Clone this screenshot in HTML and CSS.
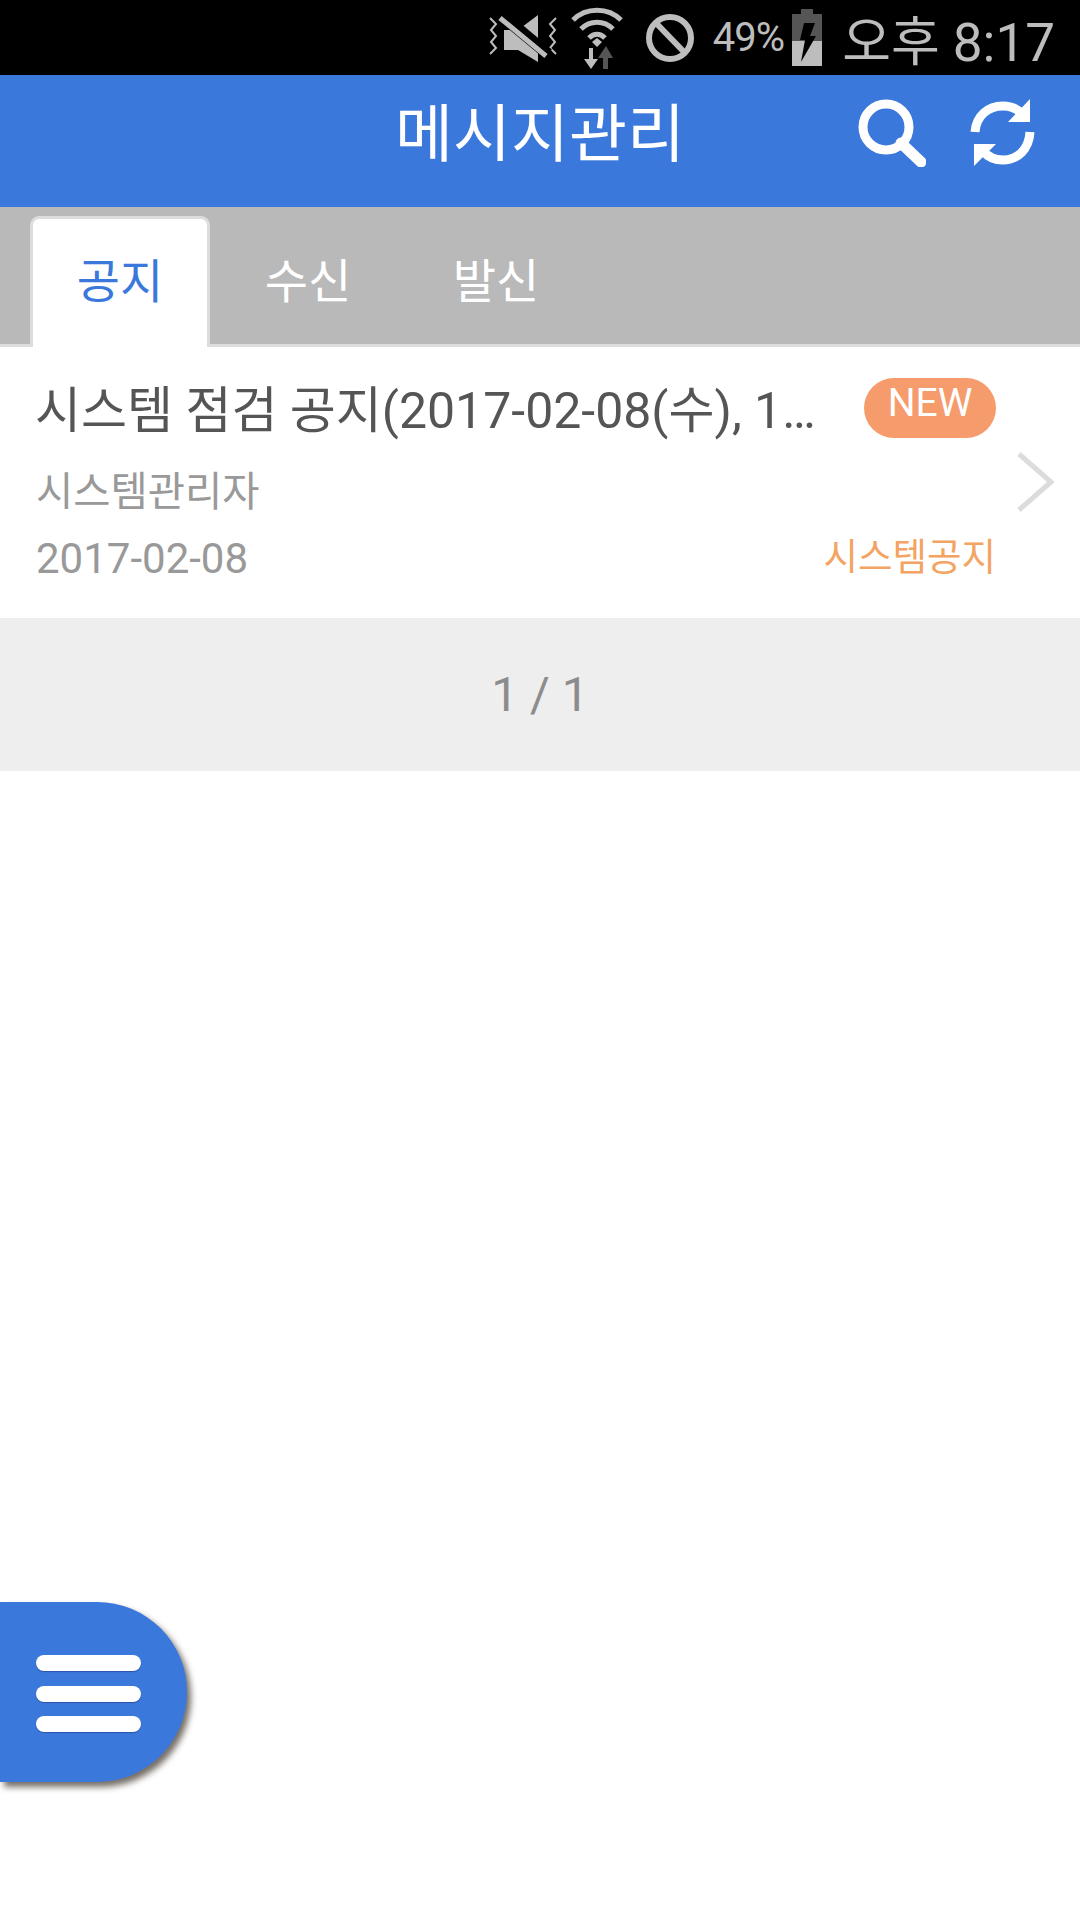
FILE: index.html
```html
<!DOCTYPE html>
<html lang="ko">
<head>
    <meta charset="UTF-8">
    <meta name="viewport" content="width=device-width, initial-scale=1.0">
    <title>메시지관리</title>
    <link rel="stylesheet" href="styles.css">
</head>
<body>
    <div class="status-bar">
        <svg class="icon-mute" viewBox="0 0 70 56">
            <path d="M2 8l6 6-5 6 5 6-5 6 5 6-6 6M68 8l-6 6 5 6-5 6 5 6-5 6 6 6" fill="none" stroke="#bdbdbd" stroke-width="2"/>
            <path d="M16 20h14L50 5v47L30 40H16z" fill="#bdbdbd"/>
            <path d="M12 4l48 40" stroke="#000" stroke-width="12"/>
            <path d="M12 8l46 38" stroke="#bdbdbd" stroke-width="5"/>
        </svg>
        <svg class="icon-wifi" viewBox="0 0 52 64">
            <path d="M2 14C15 1 37 1 50 14M10 23c9-9 23-9 32 0M18 32c5-5 11-5 16 0" fill="none" stroke="#bdbdbd" stroke-width="5"/>
            <path d="M21 36l5-4 5 4-5 5z" fill="#bdbdbd"/>
            <path d="M18 42h4v11h5l-7 10-7-10h5z" fill="#bdbdbd"/>
            <path d="M32 63V52h-5l8-12 7 12h-5v11z" fill="#555"/>
        </svg>
        <svg class="icon-ban" viewBox="0 0 48 58">
            <circle cx="24" cy="29" r="21" fill="none" stroke="#bdbdbd" stroke-width="6"/>
            <path d="M10 14l29 30" stroke="#bdbdbd" stroke-width="6"/>
        </svg>
        <span class="battery-text">49%</span>
        <svg class="icon-battery" viewBox="0 0 30 57">
            <path d="M9 0h12v5h9v27H0V5h9z" fill="#555"/>
            <path d="M0 32h30v25H0z" fill="#bdbdbd"/>
            <path d="M12 14h11l-5 13h6L9 53l4-22H8z" fill="#000"/>
        </svg>
        <span class="clock">오후 8:17</span>
    </div>

    <header class="app-header">
        <h1>메시지관리</h1>
        <div class="header-icons">
            <svg class="icon-search" viewBox="0 0 68 68">
                <circle cx="28" cy="28" r="23" fill="none" stroke="#fff" stroke-width="9"/>
                <path d="M43 44l20 19" stroke="#fff" stroke-width="11" stroke-linecap="round"/>
            </svg>
            <svg class="icon-refresh" viewBox="0 0 66 68">
                <path d="M5 33C6 17 18 7 33 7c8 0 15 3 20 9" fill="none" stroke="#fff" stroke-width="9"/>
                <path d="M60 0v23H38z" fill="#fff"/>
                <path d="M60 33C59 50 48 61 33 61c-8 0-15-3-20-9" fill="none" stroke="#fff" stroke-width="9"/>
                <path d="M4 67V45h22z" fill="#fff"/>
            </svg>
        </div>
    </header>

    <nav class="tabs">
        <div class="tab active">공지</div>
        <div class="tab">수신</div>
        <div class="tab">발신</div>
    </nav>

    <div class="msg-item">
        <div class="msg-body">
            <div class="msg-row">
                <span class="msg-title">시스템 점검 공지(2017-02-08(수), 1…</span>
                <span class="badge-new">NEW</span>
            </div>
            <div class="msg-sender">시스템관리자</div>
            <div class="msg-row">
                <span class="msg-date">2017-02-08</span>
                <span class="msg-category">시스템공지</span>
            </div>
        </div>
        <svg class="chevron" viewBox="0 0 38 62">
            <path d="M3 3l32 28L3 59" fill="none" stroke="#dcdcdc" stroke-width="5"/>
        </svg>
    </div>

    <div class="pager">1 / 1</div>

    <button class="fab">
        <span></span>
        <span></span>
        <span></span>
    </button>
</body>
</html>
```

FILE: styles.css
```css
html, body {
    margin: 0;
    padding: 0;
}
body {
    width: 1080px;
    height: 1920px;
    background: #fff;
    font-family: Roboto, "Noto Sans CJK KR", sans-serif;
    position: relative;
    overflow: hidden;
}
.status-bar {
    height: 75px;
    background: #000;
    color: #bdbdbd;
    display: flex;
    align-items: center;
    justify-content: flex-end;
    padding-right: 25px;
    box-sizing: border-box;
}
.icon-mute {
    width: 70px;
    height: 56px;
    margin-right: 13px;
}
.icon-wifi {
    width: 52px;
    height: 64px;
    margin-right: 23px;
}
.icon-ban {
    width: 48px;
    height: 58px;
    margin-right: 19px;
}
.battery-text {
    font-size: 40px;
    letter-spacing: -1px;
    margin-right: 8px;
}
.icon-battery {
    width: 30px;
    height: 57px;
    margin-right: 20px;
}
.clock {
    font-size: 53px;
}
.app-header {
    height: 132px;
    background: #3b78db;
    position: relative;
    display: flex;
    align-items: center;
    justify-content: center;
    padding-bottom: 12px;
    box-sizing: border-box;
}
.app-header h1 {
    margin: 0;
    color: #fff;
    font-size: 63px;
    font-weight: 400;
    line-height: 1.2;
}
.header-icons {
    position: absolute;
    top: 24px;
    right: 44px;
    display: flex;
    gap: 44px;
}
.icon-search {
    width: 68px;
    height: 68px;
}
.icon-refresh {
    width: 66px;
    height: 68px;
}
.tabs {
    height: 140px;
    background: #b9b9b9;
    border-bottom: 3px solid #ddd;
    box-sizing: border-box;
    display: flex;
    align-items: flex-end;
    gap: 8px;
    padding-left: 30px;
}
.tab {
    width: 180px;
    height: 128px;
    box-sizing: border-box;
    margin-bottom: -3px;
    color: #fff;
    font-size: 47px;
    display: flex;
    align-items: center;
    justify-content: center;
    padding-bottom: 12px;
}
.tab.active {
    height: 131px;
    background: #fff;
    color: #3b78db;
    border: 3px solid #ddd;
    border-bottom: none;
    border-radius: 9px 9px 0 0;
}
.msg-item {
    height: 271px;
    box-sizing: border-box;
    display: flex;
    align-items: flex-start;
    padding: 31px 24px 0 36px;
}
.msg-body {
    width: 960px;
}
.msg-row {
    height: 60px;
    display: flex;
    align-items: center;
    justify-content: space-between;
}
.msg-title {
    margin-top: 6px;
    margin-left: -1px;
    font-size: 50px;
    line-height: 64px;
    color: #555;
    white-space: nowrap;
}
.badge-new {
    width: 132px;
    height: 60px;
    border-radius: 30px;
    background: #f69b6c;
    color: #fff;
    font-size: 39px;
    text-align: center;
    line-height: 50px;
}
.msg-sender {
    height: 60px;
    margin: 24px 0 6px;
    font-size: 40.5px;
    line-height: 60px;
    color: #999;
}
.msg-date {
    font-size: 42px;
    color: #999;
}
.msg-category {
    font-size: 37.5px;
    color: #f4a462;
    margin-top: -10px;
}
.chevron {
    width: 38px;
    height: 62px;
    margin-left: 20px;
    margin-top: 73px;
}
.pager {
    height: 153px;
    background: #eee;
    color: #8c8c8c;
    font-size: 48px;
    display: flex;
    align-items: center;
    justify-content: center;
}
.fab {
    position: absolute;
    left: 0;
    top: 1602px;
    width: 187px;
    height: 180px;
    padding: 3px 0 0 36px;
    border: none;
    border-radius: 0 90px 90px 0;
    background: #3b78db;
    box-shadow: 4px 5px 6px rgba(60, 50, 40, 0.7);
    display: flex;
    flex-direction: column;
    justify-content: center;
    gap: 14.5px;
}
.fab span {
    display: block;
    width: 105px;
    height: 16px;
    border-radius: 8px;
    background: #fff;
    box-shadow: 0 1px 1px rgba(0, 0, 60, 0.3);
}
```
